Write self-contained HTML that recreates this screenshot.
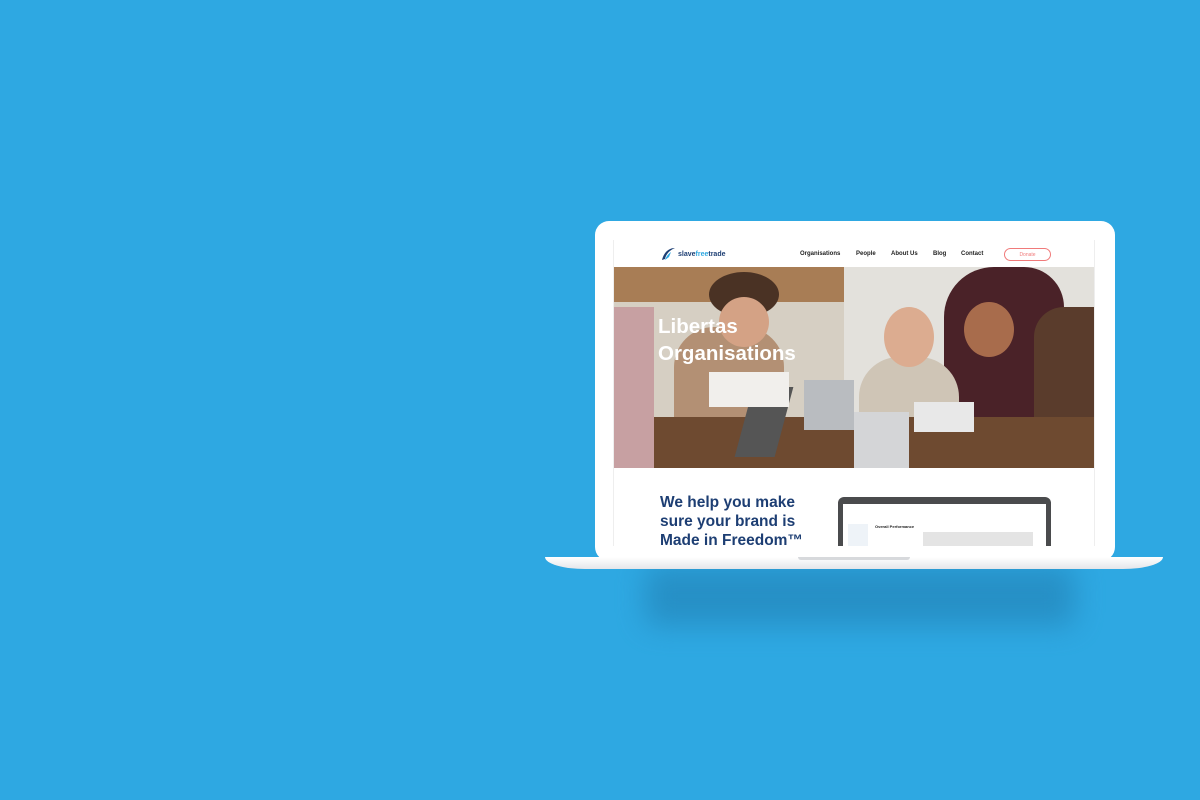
<!DOCTYPE html>
<html><head><meta charset="utf-8"><style>
*{margin:0;padding:0;box-sizing:border-box}
body{width:1200px;height:800px;background:#2ea8e2;position:relative;overflow:hidden;font-family:"Liberation Sans",sans-serif}
.shadow{position:absolute;left:645px;top:566px;width:430px;height:60px;background:#2488bd;filter:blur(14px);border-radius:10px;opacity:.75}
.lid{position:absolute;left:595px;top:221px;width:520px;height:340px;background:#fff;border-radius:14px}
.screen{position:absolute;left:613px;top:240px;width:482px;height:306px;background:#fff;overflow:hidden;border-left:1px solid #eee;border-right:1px solid #eee}
.base{position:absolute;left:545px;top:557px;width:618px;height:12px;background:linear-gradient(#fff,#e4e6ea);border-radius:0 0 40px 40px/0 0 12px 12px}
.notch{position:absolute;left:798px;top:557px;width:112px;height:3px;background:#d7d9dc;border-radius:0 0 3px 3px}
.nav{position:absolute;left:0;top:0;width:482px;height:27px}
.nav .logo{position:absolute;left:45px;top:11px;font-size:7px;font-weight:bold;color:#1d3e73}
.nav .logo b{color:#2ea8e2}
.nav a{position:absolute;top:11px;font-size:6px;font-weight:bold;color:#222;text-decoration:none}
.don{position:absolute;left:390px;top:8px;width:47px;height:13px;border:1px solid #f07a7a;border-radius:7px;color:#f07a7a;font-size:5px;text-align:center;line-height:13px}
.photo{position:absolute;left:0;top:27px;width:482px;height:201px;overflow:hidden;background:#d9d4cb}
.photo div{position:absolute}
.h1{position:absolute;left:44px;top:46px;color:#fff;font-size:20.5px;font-weight:bold;line-height:27px}
.h2{position:absolute;left:46px;top:253px;color:#1d3e73;font-size:15.5px;font-weight:bold;line-height:19px}
.mon{position:absolute;left:224px;top:257px;width:213px;height:60px;background:#4a4b4d;border-radius:6px}
.mon .in{position:absolute;left:5px;top:7px;right:5px;bottom:0;background:#fff}
</style></head><body>
<div class="shadow"></div>
<div class="lid"></div>
<div class="screen">
 <div class="nav">
  <svg style="position:absolute;left:46px;top:7px" width="16" height="15" viewBox="0 0 16 15"><path d="M15 1C9 1 4 5 2 13l3-1C6 7 10 3 15 1Z" fill="#1d3e73"/><path d="M11 5C8 7 6 10 5 13l4-3z" fill="#2ea8e2"/></svg>
  <div class="logo" style="left:64px">slave<b>free</b>trade</div>
  <a style="left:186px">Organisations</a><a style="left:242px">People</a><a style="left:277px">About Us</a><a style="left:319px">Blog</a><a style="left:347px">Contact</a>
  <div class="don">Donate</div>
 </div>
 <div class="photo">
  <div style="left:0;top:0;width:230px;height:35px;background:#a87d55"></div>
  <div style="left:230px;top:0;width:252px;height:201px;background:#e3e1dc"></div>
  <div style="left:0;top:35px;width:230px;height:166px;background:#d6cfc3"></div>
  <div style="left:60px;top:60px;width:110px;height:100px;background:#b39074;border-radius:40px 40px 0 0"></div>
  <div style="left:95px;top:5px;width:70px;height:45px;background:#4a3224;border-radius:50%"></div>
  <div style="left:105px;top:30px;width:50px;height:50px;background:#d4a285;border-radius:50%"></div>
  <div style="left:330px;top:0;width:120px;height:170px;background:#4a2228;border-radius:50px 40px 0 0"></div>
  <div style="left:350px;top:35px;width:50px;height:55px;background:#a86c4c;border-radius:50%"></div>
  <div style="left:245px;top:90px;width:100px;height:111px;background:#cfc5b6;border-radius:40px 40px 0 0"></div>
  <div style="left:270px;top:40px;width:50px;height:60px;background:#dcac90;border-radius:50%"></div>
  <div style="left:420px;top:40px;width:62px;height:161px;background:#5a3c2c;border-radius:30px 0 0 0"></div>
  <div style="left:0;top:150px;width:482px;height:51px;background:#6e4a30"></div>
  <div style="left:0;top:40px;width:40px;height:161px;background:#c7a0a2"></div>
  <div style="left:130px;top:120px;width:40px;height:70px;background:#555;transform:skewX(-15deg)"></div>
  <div style="left:95px;top:105px;width:80px;height:35px;background:#f1efec"></div>
  <div style="left:190px;top:113px;width:50px;height:50px;background:#b9bcc0"></div>
  <div style="left:240px;top:145px;width:55px;height:56px;background:#d4d5d7"></div>
  <div style="left:300px;top:135px;width:60px;height:30px;background:#e8e8e8"></div>
  <div class="h1">Libertas<br>Organisations</div>
 </div>
 <div class="h2">We help you make<br>sure your brand is<br>Made in Freedom™</div>
 <div class="mon"><div class="in">
  <div style="position:absolute;left:5px;top:20px;width:20px;height:30px;background:#eef3f8"></div>
  <div style="position:absolute;left:32px;top:20px;font-size:4px;font-weight:bold;color:#222">Overall Performance</div>
  <div style="position:absolute;left:80px;top:28px;width:110px;height:20px;background:#ddd;opacity:.8"></div>
 </div></div>
</div>
<div class="base"></div><div class="notch"></div>
</body></html>
